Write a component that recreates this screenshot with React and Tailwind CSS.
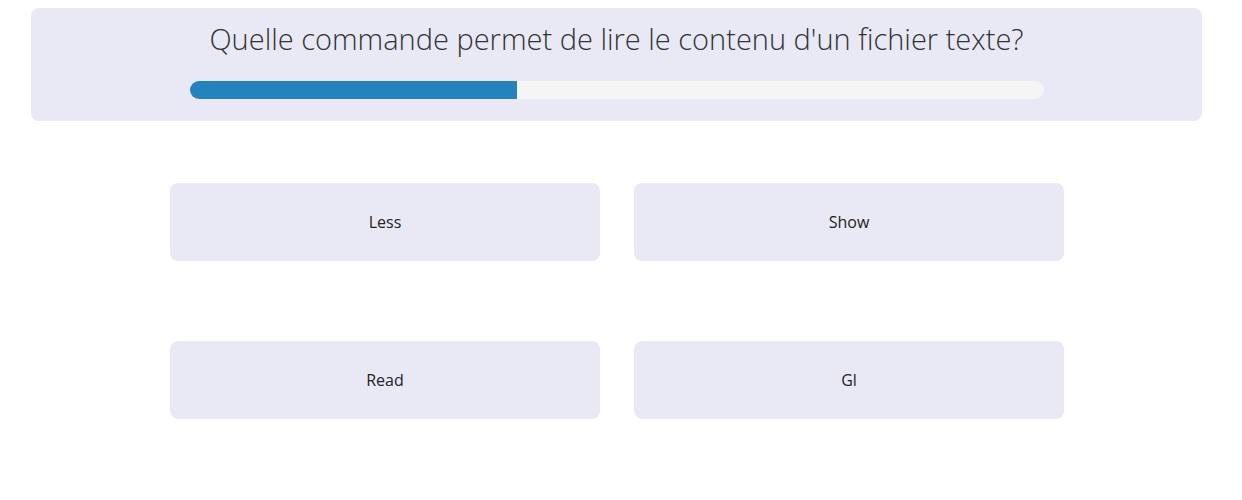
import React from 'react';

const answers = ['Less', 'Show', 'Read', 'Gl'];

const App = () => {
  const progress = 38.3;

  return (
    <div className="min-h-[500px] bg-white pt-2" style={{ fontFamily: '"Open Sans", "Liberation Sans", sans-serif' }}>
      <div className="ml-[31px] w-[1171px] rounded-lg bg-[#e9e9f5] pt-[11px] pb-[22px]">
        <h1 className="text-center text-[29px] leading-[40px] font-light text-[#333]">
          Quelle commande permet de lire le contenu d'un fichier texte?
        </h1>
        <div className="mx-auto mt-[22px] h-[18px] w-[854px] rounded-full bg-[#f5f5f5]">
          <div className="h-full rounded-l-full bg-[#2482bd]" style={{ width: `${progress}%` }} />
        </div>
      </div>

      <div className="ml-[170px] mt-[62px] grid w-[894px] grid-cols-2 gap-x-[34px] gap-y-[80px]">
        {answers.map((answer) => (
          <button
            key={answer}
            className="flex h-[78px] items-center justify-center rounded-lg bg-[#e9e9f5] text-[16px] text-[#222]"
          >
            {answer}
          </button>
        ))}
      </div>
    </div>
  );
};

export default App;
